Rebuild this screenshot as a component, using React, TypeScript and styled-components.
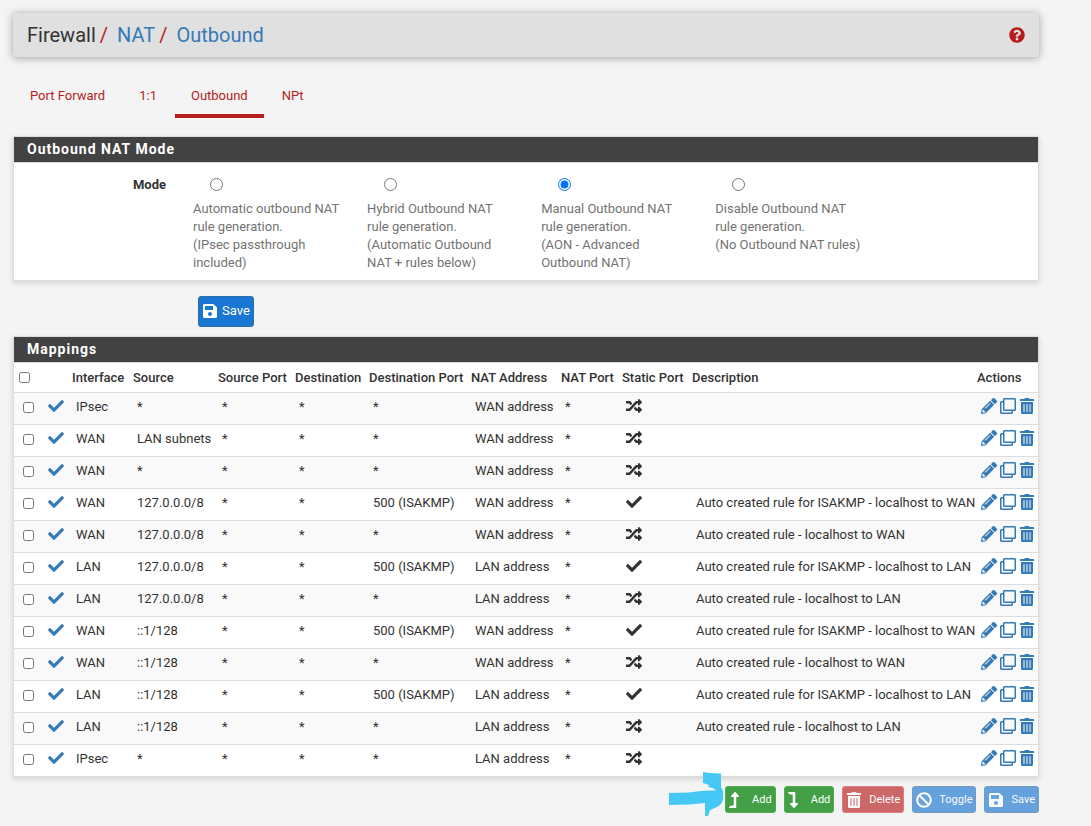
import React, { useState } from 'react';
import styled, { createGlobalStyle, css } from 'styled-components';
import {
  FaBan,
  FaCheck,
  FaLevelDownAlt,
  FaLevelUpAlt,
  FaPencilAlt,
  FaQuestionCircle,
  FaRandom,
  FaRegClone,
  FaSave,
  FaTrashAlt,
} from 'react-icons/fa';

const GlobalStyle = createGlobalStyle`
  *, *::before, *::after { box-sizing: border-box; }
  body {
    margin: 0;
    background: #f4f4f4;
    color: #333;
    font: 13px/18px Roboto, "Liberation Sans", sans-serif;
  }
  svg { display: block; }
`;

const Page = styled.main`
  padding: 13px 52px 13px 13px;
`;

const PageHeader = styled.header`
  display: flex;
  align-items: center;
  justify-content: space-between;
  height: 44px;
  padding: 0 14px;
  border-radius: 2px;
  background: #e0e0e0;
  box-shadow: 0 1px 8px rgba(0, 0, 0, 0.35);
`;

const Crumbs = styled.ol`
  display: flex;
  margin: 0;
  padding: 0;
  list-style: none;
  font-size: 20px;
  line-height: 24px;
`;

const Crumb = styled.li`
  & + &::before {
    content: '/';
    padding: 0 9px 0 4px;
    color: #b71c1c;
  }
`;

const CrumbLink = styled.a`
  color: #337ab7;
  text-decoration: none;
`;

const HelpLink = styled.a`
  color: #b71c1c;
  font-size: 16px;
`;

const Tabs = styled.nav`
  display: flex;
  gap: 2px;
  margin: 17px 0 18px;
  padding-left: 1px;
`;

const Tab = styled.a<{ $active?: boolean }>`
  padding: 13px 16px 9px;
  border-bottom: 4px solid ${(p) => (p.$active ? '#b71c1c' : 'transparent')};
  color: #b71c1c;
  text-decoration: none;
`;

const Panel = styled.section`
  border: 1px solid #ddd;
  background: #fff;
  box-shadow: 0 2px 6px rgba(0, 0, 0, 0.14);
`;

const PanelTitle = styled.h2`
  margin: 0;
  padding: 3px 13px;
  border-bottom: 1px solid #ddd;
  background: #424242;
  color: #fff;
  font-size: 14px;
  font-weight: 700;
  line-height: 19px;
  letter-spacing: 1px;
`;

const ModeRow = styled.div`
  display: grid;
  grid-template-columns: 152px repeat(4, 17%);
  padding: 13px 0 8px;
`;

const ModeLabel = styled.span`
  text-align: right;
  font-weight: 700;
`;

const ModeOption = styled.div`
  padding-left: 27px;
`;

const Radio = styled.input`
  display: block;
  width: 13px;
  height: 13px;
  margin: 2px 0 9px 17px;
`;

const ModeText = styled.label`
  display: block;
  width: 147px;
  color: #737373;
`;

const SaveRow = styled.div`
  padding: 15px 0 9px 185px;
`;

type Tone = 'primary' | 'success' | 'danger';

const toneColors: Record<Tone, { fill: string; edge: string }> = {
  primary: { fill: '#1976d2', edge: '#2e6da4' },
  success: { fill: '#43a047', edge: '#4cae4c' },
  danger: { fill: '#b71c1c', edge: '#d43f3a' },
};

const Button = styled.button<{ $tone: Tone; $small?: boolean }>`
  display: inline-flex;
  align-items: center;
  gap: 4px;
  height: 31px;
  padding: 0 3px 1px;
  border: 1px solid ${(p) => toneColors[p.$tone].edge};
  border-radius: 3px;
  background: ${(p) => toneColors[p.$tone].fill};
  color: #fff;
  font: 400 13px/18px Roboto, "Liberation Sans", sans-serif;

  &:disabled {
    opacity: 0.65;
  }

  svg {
    font-size: 16px;
  }

  ${(p) =>
    p.$small &&
    css`
      height: 27px;
      padding-bottom: 0;
      gap: 7px;
      font-size: 11px;
    `}
`;

const Table = styled.table`
  width: 100%;
  table-layout: fixed;
  border-collapse: collapse;
  white-space: nowrap;
`;

const Col = styled.col<{ $width?: number }>`
  width: ${(p) => (p.$width ? `${p.$width}px` : 'auto')};
`;

const HeadCell = styled.th`
  height: 29px;
  padding: 1px 5px 0;
  text-align: left;
  font-weight: 500;
`;

const Row = styled.tr`
  border-top: 1px solid #ddd;
  background: #fff;

  &:nth-child(odd) {
    background: #f9f9f9;
  }
`;

const Cell = styled.td`
  height: 32px;
  padding: 0 0 2px 9px;
`;

const IconCell = styled(Cell)`
  padding-bottom: 4px;
  font-size: 16px;
`;

const Checkbox = styled.input`
  display: block;
  width: 11px;
  height: 11px;
  margin: 0;
`;

const StatusIcon = styled(FaCheck)`
  color: #337ab7;
`;

const Actions = styled.div`
  display: flex;
  gap: 3px;
`;

const Action = styled.a`
  color: #337ab7;
`;

const Toolbar = styled.div`
  display: flex;
  justify-content: flex-end;
  gap: 8px;
  padding-top: 9px;
`;

const ArrowAnchor = styled.span`
  position: relative;
`;

const ArrowMark = styled.svg`
  position: absolute;
  right: -8px;
  top: -17px;
  width: 56px;
  height: 48px;
`;

const modes = [
  ['Automatic outbound NAT rule generation.', '(IPsec passthrough included)'],
  ['Hybrid Outbound NAT rule generation.', '(Automatic Outbound NAT + rules below)'],
  ['Manual Outbound NAT rule generation.', '(AON - Advanced Outbound NAT)'],
  ['Disable Outbound NAT rule generation.', '(No Outbound NAT rules)'],
];

const columnWidths = [25, 28, 61, 85, 77, 74, 102, 90, 61, 70, undefined, 66];

const headings = [
  'Interface',
  'Source',
  'Source Port',
  'Destination',
  'Destination Port',
  'NAT Address',
  'NAT Port',
  'Static Port',
  'Description',
  'Actions',
];

interface Mapping {
  iface: string;
  source: string;
  nat: string;
  isakmp?: boolean;
  note?: string;
}

const mappings: Mapping[] = [
  { iface: 'IPsec', source: '*', nat: 'WAN' },
  { iface: 'WAN', source: 'LAN subnets', nat: 'WAN' },
  { iface: 'WAN', source: '*', nat: 'WAN' },
  { iface: 'WAN', source: '127.0.0.0/8', nat: 'WAN', isakmp: true, note: 'Auto created rule for ISAKMP - localhost to WAN' },
  { iface: 'WAN', source: '127.0.0.0/8', nat: 'WAN', note: 'Auto created rule - localhost to WAN' },
  { iface: 'LAN', source: '127.0.0.0/8', nat: 'LAN', isakmp: true, note: 'Auto created rule for ISAKMP - localhost to LAN' },
  { iface: 'LAN', source: '127.0.0.0/8', nat: 'LAN', note: 'Auto created rule - localhost to LAN' },
  { iface: 'WAN', source: '::1/128', nat: 'WAN', isakmp: true, note: 'Auto created rule for ISAKMP - localhost to WAN' },
  { iface: 'WAN', source: '::1/128', nat: 'WAN', note: 'Auto created rule - localhost to WAN' },
  { iface: 'LAN', source: '::1/128', nat: 'LAN', isakmp: true, note: 'Auto created rule for ISAKMP - localhost to LAN' },
  { iface: 'LAN', source: '::1/128', nat: 'LAN', note: 'Auto created rule - localhost to LAN' },
  { iface: 'IPsec', source: '*', nat: 'LAN' },
];

export default function App() {
  const [mode, setMode] = useState(2);

  return (
    <>
      <GlobalStyle />
      <Page>
        <PageHeader>
          <Crumbs>
            <Crumb>Firewall</Crumb>
            <Crumb><CrumbLink href="#nat">NAT</CrumbLink></Crumb>
            <Crumb><CrumbLink href="#outbound">Outbound</CrumbLink></Crumb>
          </Crumbs>
          <HelpLink href="#help" aria-label="Help"><FaQuestionCircle /></HelpLink>
        </PageHeader>

        <Tabs>
          <Tab href="#port-forward">Port Forward</Tab>
          <Tab href="#one-to-one">1:1</Tab>
          <Tab href="#outbound" $active>Outbound</Tab>
          <Tab href="#npt">NPt</Tab>
        </Tabs>

        <Panel>
          <PanelTitle>Outbound NAT Mode</PanelTitle>
          <ModeRow role="radiogroup" aria-labelledby="mode-label">
            <ModeLabel id="mode-label">Mode</ModeLabel>
            {modes.map(([title, detail], i) => (
              <ModeOption key={title}>
                <Radio type="radio" name="mode" id={`mode-${i}`} checked={mode === i} onChange={() => setMode(i)} />
                <ModeText htmlFor={`mode-${i}`}>
                  {title}
                  <br />
                  {detail}
                </ModeText>
              </ModeOption>
            ))}
          </ModeRow>
        </Panel>

        <SaveRow>
          <Button type="submit" $tone="primary"><FaSave />Save</Button>
        </SaveRow>

        <Panel>
          <PanelTitle>Mappings</PanelTitle>
          <Table>
            <colgroup>
              {columnWidths.map((w, i) => <Col key={i} $width={w} />)}
            </colgroup>
            <thead>
              <tr>
                <HeadCell><Checkbox type="checkbox" aria-label="Select all" /></HeadCell>
                <HeadCell />
                {headings.map((h) => <HeadCell key={h} scope="col">{h}</HeadCell>)}
              </tr>
            </thead>
            <tbody>
              {mappings.map((m, i) => (
                <Row key={i}>
                  <Cell><Checkbox type="checkbox" aria-label={`Select rule ${i + 1}`} /></Cell>
                  <IconCell><StatusIcon /></IconCell>
                  <Cell>{m.iface}</Cell>
                  <Cell>{m.source}</Cell>
                  <Cell>*</Cell>
                  <Cell>*</Cell>
                  <Cell>{m.isakmp ? '500 (ISAKMP)' : '*'}</Cell>
                  <Cell>{m.nat} address</Cell>
                  <Cell>*</Cell>
                  <IconCell>{m.isakmp ? <FaCheck /> : <FaRandom />}</IconCell>
                  <Cell>{m.note}</Cell>
                  <IconCell>
                    <Actions>
                      <Action href="#edit" aria-label="Edit"><FaPencilAlt /></Action>
                      <Action href="#copy" aria-label="Copy"><FaRegClone /></Action>
                      <Action href="#delete" aria-label="Delete"><FaTrashAlt /></Action>
                    </Actions>
                  </IconCell>
                </Row>
              ))}
            </tbody>
          </Table>
        </Panel>

        <Toolbar>
          <ArrowAnchor>
            <ArrowMark viewBox="0 0 56 48" aria-hidden="true">
              <path
                fill="#45c8f5"
                d="M0 24 L20 23.500 Q35 21 47 21.500 L44 19 L39 18 L40 16 L34 14 L34 3 L40 4 L52 4.500 L52 18 L54 22 L54 30 Q53 36 47 38.500 L41 41 L39 47 L36 47 L36 34 L20 35.500 L0 36 Z"
              />
            </ArrowMark>
          </ArrowAnchor>
          <Button type="button" $tone="success" $small><FaLevelUpAlt preserveAspectRatio="xMinYMid" />Add</Button>
          <Button type="button" $tone="success" $small><FaLevelDownAlt preserveAspectRatio="xMinYMid" />Add</Button>
          <Button type="button" $tone="danger" $small disabled><FaTrashAlt />Delete</Button>
          <Button type="button" $tone="primary" $small disabled><FaBan />Toggle</Button>
          <Button type="button" $tone="primary" $small disabled><FaSave />Save</Button>
        </Toolbar>
      </Page>
    </>
  );
}
